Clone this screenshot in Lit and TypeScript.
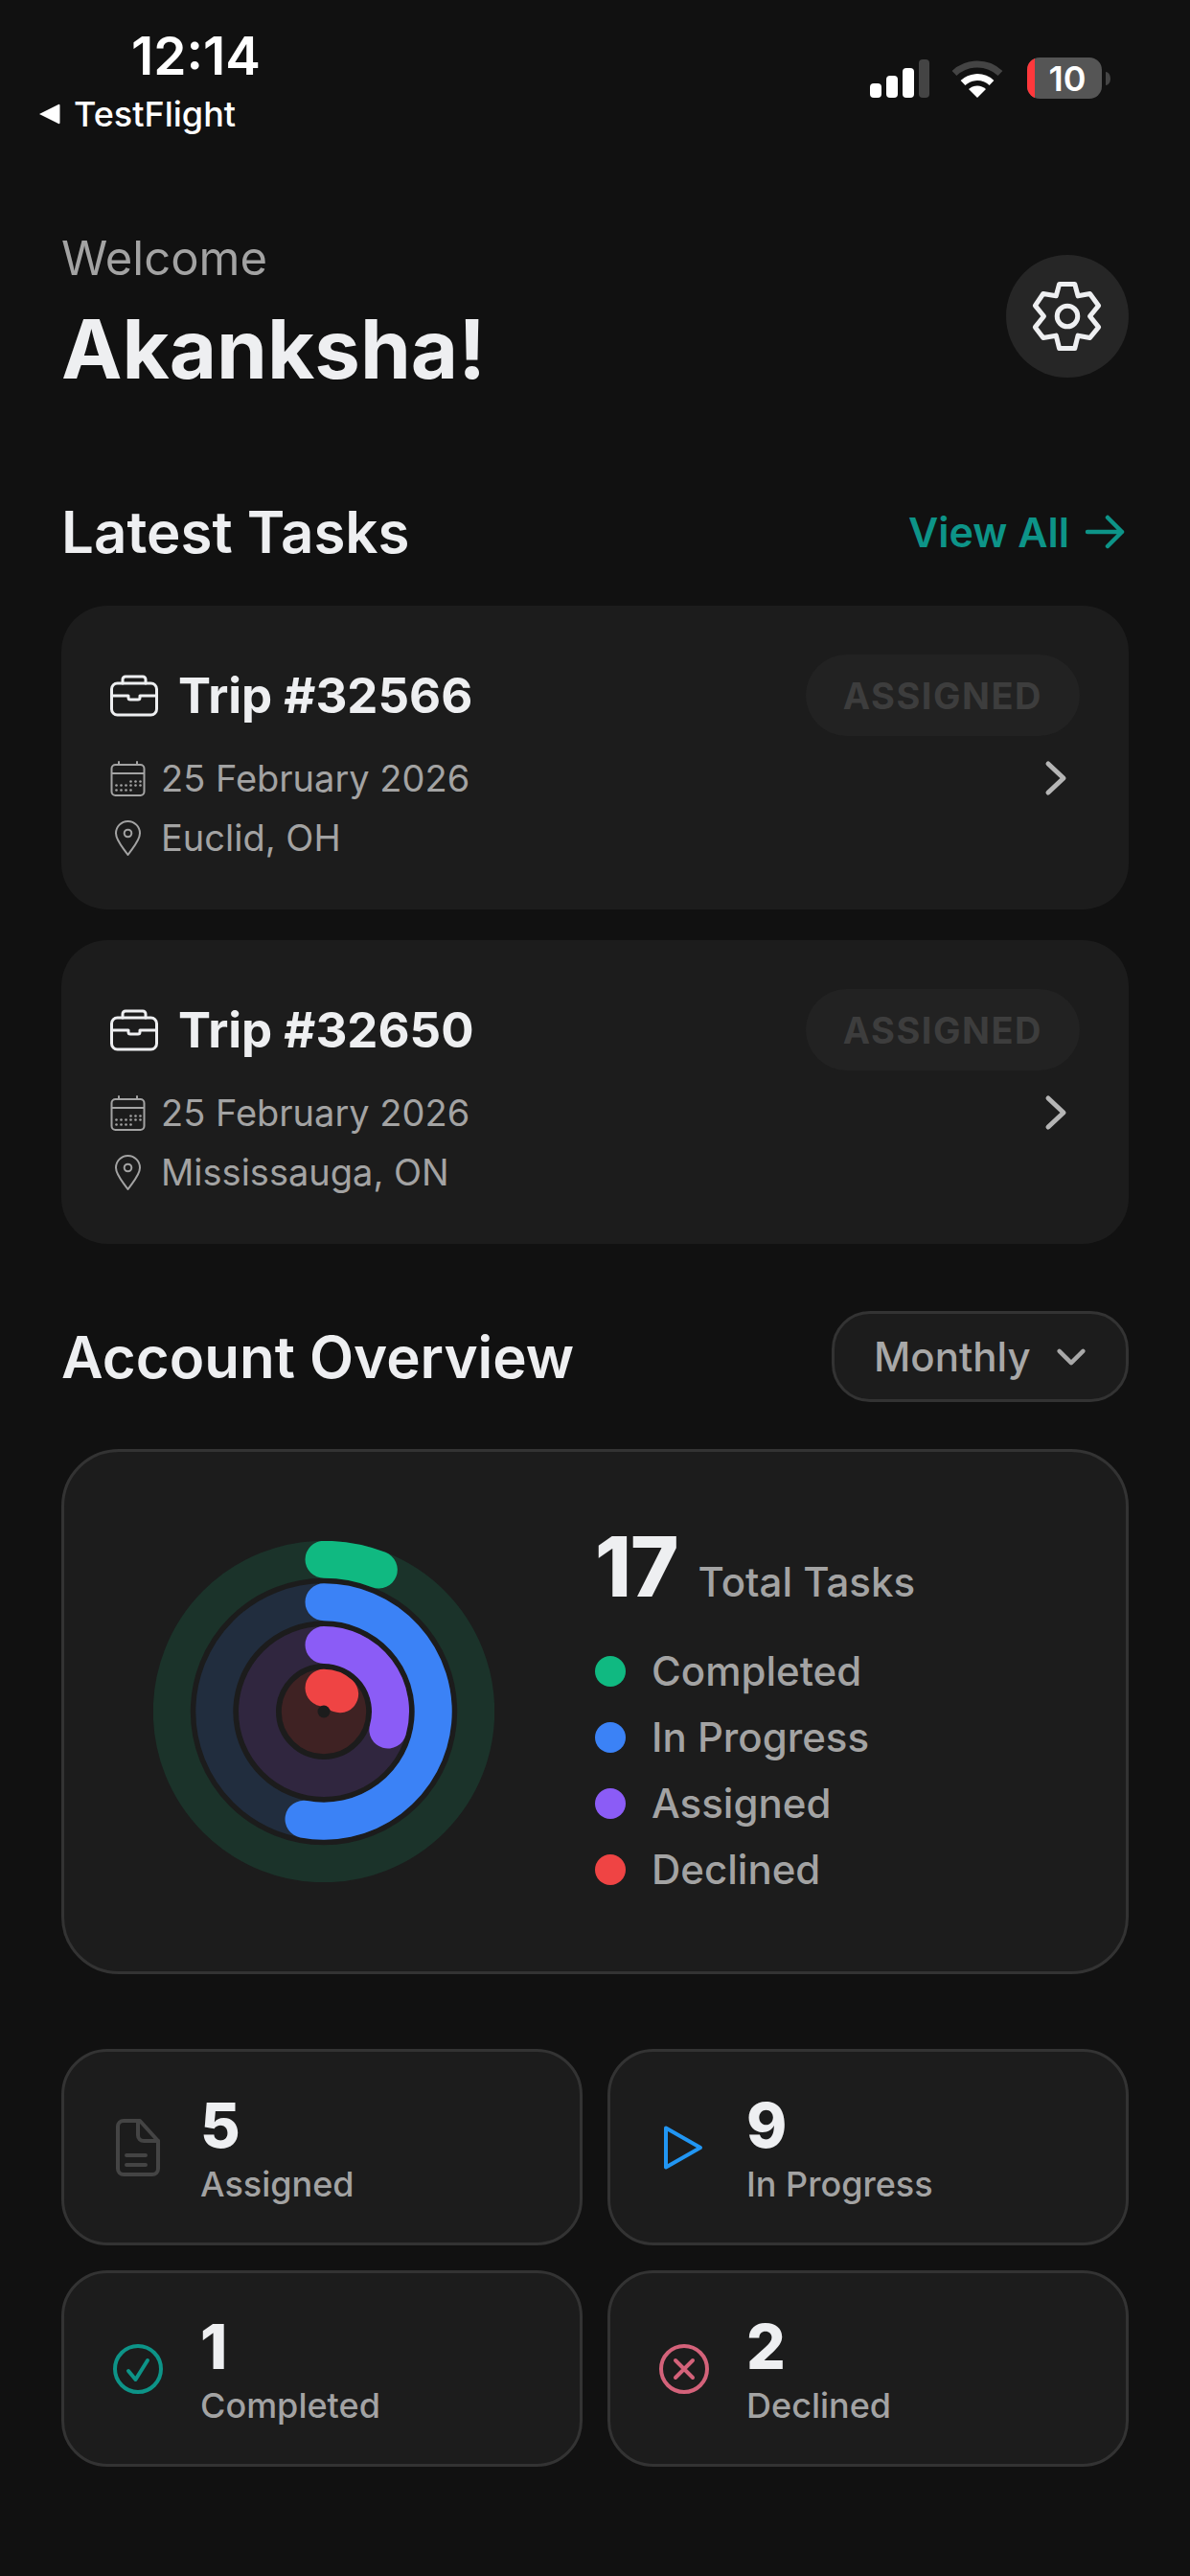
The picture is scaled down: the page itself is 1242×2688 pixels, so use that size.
import { LitElement, html, css, svg } from 'lit';
import { customElement } from 'lit/decorators.js';

const TOTAL = 17;
const CX = 178;
const CY = 178;

// one ring per status, outermost first
const rings = [
  { r: 158.7, value: 1, track: '#1b332a', color: '#10b981' },
  { r: 114.2, value: 9, track: '#212d3e', color: '#3b82f6' },
  { r: 69.5, value: 5, track: '#30263f', color: '#8b5cf6' },
  { r: 24.7, value: 2, track: '#3f2223', color: '#ef4444' },
];

const legend = [
  { label: 'Completed', dot: 'green' },
  { label: 'In Progress', dot: 'blue' },
  { label: 'Assigned', dot: 'purple' },
  { label: 'Declined', dot: 'red' },
];

const trips = [
  { id: '32566', date: '25 February 2026', place: 'Euclid, OH' },
  { id: '32650', date: '25 February 2026', place: 'Mississauga, ON' },
];

const arcPath = (r: number, value: number) => {
  const angle = (value / TOTAL) * Math.PI * 2;
  const x = CX + r * Math.sin(angle);
  const y = CY - r * Math.cos(angle);
  const large = angle > Math.PI ? 1 : 0;
  return `M${CX} ${CY - r}A${r} ${r} 0 ${large} 1 ${x} ${y}`;
};

const briefcase = html`<svg class="ic-case" viewBox="0 0 50 44" fill="none" stroke="#eeeff1" stroke-width="3" stroke-linecap="round" stroke-linejoin="round">
  <rect x="1.5" y="9" width="47" height="33" rx="6" />
  <path d="M13 9V5a3 3 0 0 1 3-3h18a3 3 0 0 1 3 3v4" />
  <path d="M2 22h17v2a2 2 0 0 0 2 2h8a2 2 0 0 0 2-2v-2h17" />
</svg>`;

const calendarDots = [
  [22, 21], [27, 21], [32, 21],
  [7, 25], [12, 25], [17, 25], [22, 25], [27, 25], [32, 25],
  [7, 30], [12, 30], [17, 30], [22, 30],
];

const calendar = html`<svg class="ic-meta" viewBox="0 0 37 37" fill="none" stroke="#a3a3a3" stroke-width="2" stroke-linecap="round">
  <rect x="1.5" y="4" width="34" height="32" rx="4" />
  <path d="M2 13h33M9 1v3M28 1v3" />
  ${calendarDots.map(([x, y]) => svg`<circle cx=${x - 0.5} cy=${y + 0.5} r="1.3" fill="#a3a3a3" stroke="none" />`)}
</svg>`;

const pin = html`<svg class="ic-meta" viewBox="0 0 37 37" fill="none" stroke="#a3a3a3" stroke-width="2" stroke-linejoin="round">
  <path d="M18.5 36C13 28 6 21 6 13.5a12.5 12.5 0 0 1 25 0C31 21 24 28 18.5 36Z" />
  <circle cx="18.5" cy="13.5" r="3.8" />
</svg>`;

const chevronRight = html`<svg class="ic-chevron" viewBox="0 0 24 38" fill="none" stroke="#b5b5b5" stroke-width="5" stroke-linecap="round" stroke-linejoin="round">
  <path d="M4 4l16 15L4 34" />
</svg>`;

const statIcons = {
  doc: html`<svg class="ic-stat" viewBox="0 0 60 60" fill="none" stroke="#444" stroke-width="4" stroke-linejoin="round" stroke-linecap="round">
    <path d="M15 2h17l19 21v29a6 6 0 0 1-6 6H15a6 6 0 0 1-6-6V8a6 6 0 0 1 6-6Z" />
    <path d="M30 2v15a6 6 0 0 0 6 6h15M18 38h20M18 48h20" />
  </svg>`,
  play: html`<svg class="ic-stat" viewBox="0 0 60 60" fill="none" stroke="#2196f3" stroke-width="4" stroke-linejoin="round">
    <path d="M11 9.5L47 30 11 50.5Z" />
  </svg>`,
  check: html`<svg class="ic-stat" viewBox="0 0 60 60" fill="none" stroke="#0d9488" stroke-width="4" stroke-linecap="round" stroke-linejoin="round">
    <circle cx="30" cy="30" r="24" />
    <path d="M20 32l7.5 9L40 21" />
  </svg>`,
  cross: html`<svg class="ic-stat" viewBox="0 0 60 60" fill="none" stroke="#d4627a" stroke-width="4" stroke-linecap="round">
    <circle cx="30" cy="30" r="24" />
    <path d="M21 21l18 18M39 21L21 39" />
  </svg>`,
};

const stats = [
  { n: 5, label: 'Assigned', icon: statIcons.doc },
  { n: 9, label: 'In Progress', icon: statIcons.play },
  { n: 1, label: 'Completed', icon: statIcons.check },
  { n: 2, label: 'Declined', icon: statIcons.cross },
];

@customElement('app-root')
export class AppRoot extends LitElement {
  static styles = css`
    :host {
      display: block;
      min-height: 2688px;
      background: #111111;
      font-family: 'Inter', 'Liberation Sans', sans-serif;
      color: #eeeff1;
    }

    .status {
      display: flex;
      justify-content: space-between;
      height: 240px;
      padding: 24px 64px 0 40px;
      box-sizing: border-box;
    }
    .time {
      font-size: 55px;
      font-weight: 600;
      line-height: 68px;
      color: #fff;
      margin-left: 97px;
    }
    .back {
      display: flex;
      align-items: center;
      gap: 14px;
      margin-top: 5px;
      font-size: 36px;
      font-weight: 500;
      line-height: 44px;
      color: #fff;
    }
    .back svg {
      width: 23px;
      height: 24px;
    }
    .sys {
      display: flex;
      align-items: flex-start;
      margin: 36px 19px 0 0;
    }
    .signal {
      width: 62px;
      height: 40px;
      margin-top: 2px;
    }
    .wifi {
      width: 54px;
      height: 39px;
      margin: 3px 25px 0 23px;
    }
    .battery {
      position: relative;
      width: 78px;
      height: 43px;
      border-radius: 13px;
      background: #555;
      overflow: hidden;
      display: flex;
      align-items: center;
      justify-content: center;
      font-size: 36px;
      font-weight: 600;
      color: #fff;
      padding-left: 6px;
      box-sizing: border-box;
    }
    .battery::before {
      content: '';
      position: absolute;
      left: 0;
      top: 0;
      bottom: 0;
      width: 8px;
      background: #ff383c;
    }
    .nub {
      width: 5px;
      height: 14px;
      margin: 15px 0 0 4px;
    }

    .page {
      padding: 0 64px;
    }

    .hello {
      display: flex;
      justify-content: space-between;
      align-items: center;
      height: 180px;
    }
    .welcome {
      font-size: 49px;
      line-height: 60px;
      color: #a3a3a3;
    }
    .name {
      font-size: 85px;
      font-weight: 700;
      line-height: 120px;
      padding-top: 5px;
      margin-bottom: -5px;
    }
    .gear {
      width: 128px;
      height: 128px;
      border-radius: 50%;
      background: #262626;
      display: flex;
      align-items: center;
      justify-content: center;
    }
    .gear svg {
      width: 84px;
      height: 84px;
    }

    .section {
      display: flex;
      justify-content: space-between;
      align-items: center;
    }
    .section h2 {
      margin: 0;
      font-size: 60px;
      font-weight: 600;
      line-height: 72px;
    }
    .tasks-head {
      margin: 99px 0 41px;
    }
    .view-all {
      display: flex;
      align-items: center;
      gap: 16px;
      margin-right: 4px;
      font-size: 43px;
      font-weight: 600;
      color: #0d9488;
    }
    .view-all svg {
      width: 42px;
      height: 36px;
    }

    .trips {
      display: flex;
      flex-direction: column;
      gap: 32px;
    }
    .trip {
      height: 317px;
      box-sizing: border-box;
      padding: 51px 51px 0;
      border-radius: 48px;
      background: #1c1c1c;
    }
    .trip-top {
      display: flex;
      justify-content: space-between;
      align-items: center;
    }
    .trip-title {
      display: flex;
      align-items: center;
      gap: 21px;
      font-size: 51px;
      font-weight: 700;
    }
    .ic-case {
      width: 50px;
      height: 44px;
    }
    .badge {
      display: flex;
      align-items: center;
      height: 85px;
      padding: 0 39px;
      border-radius: 43px;
      background: #222222;
      font-size: 38px;
      font-weight: 700;
      letter-spacing: 1.5px;
      color: #3d3d3d;
    }
    .trip-body {
      display: flex;
      justify-content: space-between;
      align-items: center;
      margin-top: 13px;
    }
    .meta {
      display: flex;
      align-items: center;
      gap: 16px;
      height: 62px;
      font-size: 38px;
      color: #a3a3a3;
    }
    .ic-meta {
      width: 37px;
      height: 37px;
    }
    .chev-box {
      width: 50px;
      display: flex;
      justify-content: center;
      margin-bottom: 62px;
    }
    .ic-chevron {
      width: 24px;
      height: 38px;
    }

    .overview-head {
      margin: 70px 0 49px;
    }
    .range {
      display: flex;
      align-items: center;
      gap: 27px;
      height: 95px;
      width: 310px;
      box-sizing: border-box;
      padding-left: 41px;
      border: 3px solid #333;
      border-radius: 40px;
      background: #1c1c1c;
      font-size: 42px;
      font-weight: 500;
      color: #a8a8a8;
    }
    .range svg {
      width: 30px;
      height: 20px;
    }

    .overview {
      display: flex;
      align-items: center;
      height: 548px;
      box-sizing: border-box;
      padding-left: 93px;
      border: 3px solid #333;
      border-radius: 60px;
      background: #1c1c1c;
    }
    .donut {
      width: 356px;
      height: 356px;
      flex: none;
    }
    .totals {
      margin-left: 105px;
    }
    .total {
      display: flex;
      align-items: baseline;
      gap: 21px;
      margin-bottom: 26px;
    }
    .total b {
      font-size: 86px;
      font-weight: 800;
      line-height: 96px;
      letter-spacing: -1px;
    }
    .total span {
      font-size: 42px;
      font-weight: 500;
      color: #a3a3a3;
    }
    .legend-row {
      display: flex;
      align-items: center;
      gap: 27px;
      height: 69px;
      font-size: 42px;
      font-weight: 500;
      color: #a3a3a3;
    }
    .dot {
      width: 32px;
      height: 32px;
      border-radius: 50%;
    }
    .dot.green { background: #10b981; }
    .dot.blue { background: #3b82f6; }
    .dot.purple { background: #8b5cf6; }
    .dot.red { background: #ef4444; }

    .stats {
      display: grid;
      grid-template-columns: 1fr 1fr;
      gap: 26px;
      margin-top: 78px;
    }
    .stat {
      display: flex;
      align-items: center;
      gap: 35px;
      height: 205px;
      box-sizing: border-box;
      padding-left: 47px;
      border: 3px solid #333;
      border-radius: 48px;
      background: #1c1c1c;
    }
    .ic-stat {
      width: 60px;
      height: 60px;
    }
    .stat b {
      display: block;
      font-size: 64px;
      font-weight: 800;
      line-height: 72px;
      padding-top: 2px;
    }
    .stat span {
      display: block;
      font-size: 36px;
      font-weight: 500;
      line-height: 46px;
      margin-top: 2px;
      color: #a3a3a3;
    }
  `;

  renderTrip(trip: { id: string; date: string; place: string }) {
    return html`
      <div class="trip">
        <div class="trip-top">
          <div class="trip-title">${briefcase}<span>Trip #${trip.id}</span></div>
          <div class="badge">ASSIGNED</div>
        </div>
        <div class="trip-body">
          <div>
            <div class="meta">${calendar}<span>${trip.date}</span></div>
            <div class="meta">${pin}<span>${trip.place}</span></div>
          </div>
          <div class="chev-box">${chevronRight}</div>
        </div>
      </div>
    `;
  }

  render() {
    return html`
      <div class="status">
        <div>
          <div class="time">12:14</div>
          <div class="back">
            <svg viewBox="0 0 23 24" fill="#fff"><path d="M1 12L21 2a1 1 0 0 1 1.5 1v18a1 1 0 0 1-1.5 1Z" /></svg>
            TestFlight
          </div>
        </div>
        <div class="sys">
          <svg class="signal" viewBox="0 0 62 40">
            <rect x="0" y="25" width="12" height="15" rx="4" fill="#fff" />
            <rect x="17" y="17" width="12" height="23" rx="4" fill="#fff" />
            <rect x="34" y="9" width="12" height="31" rx="4" fill="#fff" />
            <rect x="51" y="0" width="11" height="40" rx="4" fill="#444" />
          </svg>
          <svg class="wifi" viewBox="0 0 54 39" fill="none" stroke-width="7">
            <path d="M3 13.5A35 35 0 0 1 51 13.5" stroke="#444" />
            <path d="M12 23.5A22 22 0 0 1 42 23.5" stroke="#fff" />
            <path d="M27 39L18 30A13 13 0 0 1 36 30Z" fill="#fff" />
          </svg>
          <div class="battery">10</div>
          <svg class="nub" viewBox="0 0 5 14"><path d="M0 0a5 7 0 0 1 0 14Z" fill="#444" /></svg>
        </div>
      </div>

      <div class="page">
        <div class="hello">
          <div>
            <div class="welcome">Welcome</div>
            <div class="name">Akanksha!</div>
          </div>
          <div class="gear">
            <svg viewBox="100 103 250 250" fill="none" stroke="#eeeff1" stroke-width="15" stroke-linejoin="round">
              <path d="M200 128H248L258 165 295 158 322 195 295 228 322 262 295 295 258 288 248 328H200L190 288 150 295 125 262 152 228 125 195 150 158 190 165Z" />
              <circle cx="225" cy="228" r="32" />
            </svg>
          </div>
        </div>

        <div class="section tasks-head">
          <h2>Latest Tasks</h2>
          <div class="view-all">
            View All
            <svg viewBox="0 0 42 36" fill="none" stroke="#0d9488" stroke-width="4.5" stroke-linecap="round" stroke-linejoin="round">
              <path d="M3 18h36M24 3l15 15-15 15" />
            </svg>
          </div>
        </div>

        <div class="trips">${trips.map((t) => this.renderTrip(t))}</div>

        <div class="section overview-head">
          <h2>Account Overview</h2>
          <div class="range">
            Monthly
            <svg viewBox="0 0 34 22" fill="none" stroke="#a8a8a8" stroke-width="5" stroke-linecap="round" stroke-linejoin="round">
              <path d="M3 4l14 14L31 4" />
            </svg>
          </div>
        </div>

        <div class="overview">
          <svg class="donut" viewBox="0 0 356 356" fill="none" stroke-width="39">
            ${rings.map(
              (ring) => svg`
                <circle cx=${CX} cy=${CY} r=${ring.r} stroke=${ring.track} />
                <path d=${arcPath(ring.r, ring.value)} stroke=${ring.color} stroke-linecap="round" />
              `
            )}
            <circle cx=${CX} cy=${CY} r="6.5" fill="#1c1c1c" />
          </svg>
          <div class="totals">
            <div class="total"><b>17</b><span>Total Tasks</span></div>
            ${legend.map(
              (item) => html`
                <div class="legend-row"><div class="dot ${item.dot}"></div>${item.label}</div>
              `
            )}
          </div>
        </div>

        <div class="stats">
          ${stats.map(
            (s) => html`
              <div class="stat">
                ${s.icon}
                <div><b>${s.n}</b><span>${s.label}</span></div>
              </div>
            `
          )}
        </div>
      </div>
    `;
  }
}
